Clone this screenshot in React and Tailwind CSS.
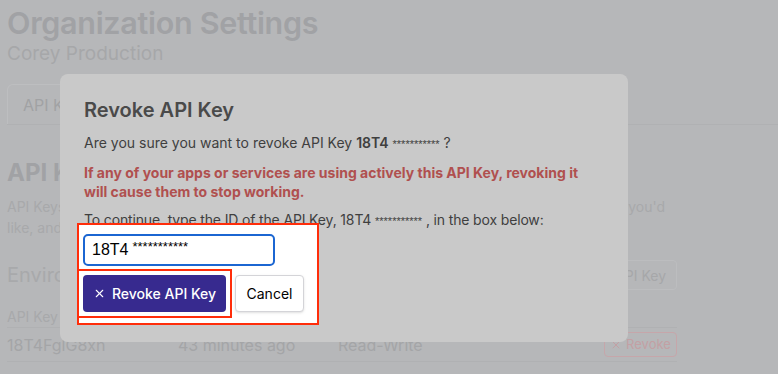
import { X } from 'lucide-react';

const Backdrop = () => (
  <div className="px-[7px] pt-[5px] font-['Inter',sans-serif]">
    <h1 className="text-[30.5px] font-semibold leading-[36px] tracking-[-0.3px] text-[#a1a2a5]">Organization Settings</h1>
    <p className="text-[19px] leading-[26px] text-[#a6a7a9]">Corey Production</p>

    <div className="mt-[17px] -mr-[7px] border-b border-[#b0b1b3]">
      <div className="w-[300px] h-[40px] rounded-t-md border border-b-0 border-[#bdbec0] flex items-center pl-[15px] text-[16px] text-[#a1a2a4]">API Keys</div>
    </div>

    <h2 className="mt-[33px] text-[24px] font-bold leading-[30px] text-[#a1a2a5]">API Keys</h2>
    <div className="mt-[8px] w-[658px] text-[14px] leading-[21px] text-[#a8a9ab]">
      <p className="flex justify-between">
        <span>API Keys let you talk to the platform from your own code and tools. Create as many as</span>
        <span>you'd</span>
      </p>
      <p>like, and revoke any of them at any time.</p>
    </div>

    <div className="mt-[22px] w-[670px] flex items-center justify-between">
      <span className="text-[20px] text-[#a8a9ab]">Environment API Keys</span>
      <span className="h-[30px] px-[10px] rounded border border-[#bcbdbf] flex items-center text-[14px] text-[#a6a7a9]">+ Create API Key</span>
    </div>

    <div className="mt-[16px] w-[670px]">
      <div className="h-[22px] flex items-end border-b border-[#b0b1b3] text-[14px] leading-[20px] text-[#a8a9ab]">API Key</div>
      <div className="h-[34px] flex items-center text-[16px] text-[#a4a5a7] border-b border-[#b0b1b3]">
        <span className="w-[171px]">18T4FglG8xn</span>
        <span className="w-[160px]">43 minutes ago</span>
        <span className="flex-1">Read-Write</span>
        <span className="h-[25px] w-[73px] rounded border border-[#c6a6aa] flex items-center justify-center gap-1 text-[13px] text-[#c3a0a4]">
          <X size={12} strokeWidth={2} /> Revoke
        </span>
      </div>
    </div>
  </div>
);

export default function App() {
  return (
    <div className="relative w-[778px] h-[374px] overflow-hidden bg-[#b6b7b9]">
      <Backdrop />

      <div className="absolute left-[60px] top-[74px] w-[568px] h-[268px] rounded-lg bg-[#c9c9c9] px-6 pt-[22px] font-['Inter',sans-serif]">
        <h3 className="text-[20px] font-semibold leading-[28px] text-[#4a4a4a]">Revoke API Key</h3>
        <p className="mt-[9px] text-[14px] leading-[20px] text-[#3f3f3f]">
          Are you sure you want to revoke API Key <b className="font-semibold">18T4</b> <span className="font-['Liberation_Sans',sans-serif] text-[11px]">***********</span> ?
        </p>
        <p className="mt-[9px] text-[14px] font-bold leading-[19px] text-[#b0504f]">
          If any of your apps or services are using actively this API Key, revoking it will cause them to stop working.
        </p>
        <p className="mt-[9px] text-[14px] leading-[20px] tracking-[-0.15px] text-[#3f3f3f]">
          To continue, type the ID of the API Key, 18T4 <span className="font-['Liberation_Sans',sans-serif] text-[11px] tracking-normal">***********</span> , in the box below:
        </p>

        <div className="relative mt-[-8px] -ml-[7px] w-[242px] h-[102px] border-2 border-[#ff2d0a] bg-white pt-[9px]">
          <div className="ml-[4px] w-[192px] h-[32px] rounded-[5px] border-2 border-[#1b66d2] flex items-center pl-[7px] font-['Liberation_Sans',sans-serif] text-[16px] text-black">
            18T4 <span className="ml-[4px] -mt-[6px] text-[13px]">***********</span>
          </div>
          <div className="mt-[3px] -ml-[2px] flex items-start gap-[3px]">
            <div className="border-2 border-[#ff2d0a] p-1">
              <button className="w-[143px] h-[37px] rounded-[4px] bg-[#372a8f] flex items-center justify-center gap-[6px] text-[14px] font-medium text-white">
                <X size={13} strokeWidth={2} /> Revoke API Key
              </button>
            </div>
            <button className="mt-[6px] w-[69px] h-[37px] rounded-[4px] border border-[#d4d4d8] bg-white shadow-sm text-[14px] text-black">Cancel</button>
          </div>
        </div>
      </div>
    </div>
  );
}
